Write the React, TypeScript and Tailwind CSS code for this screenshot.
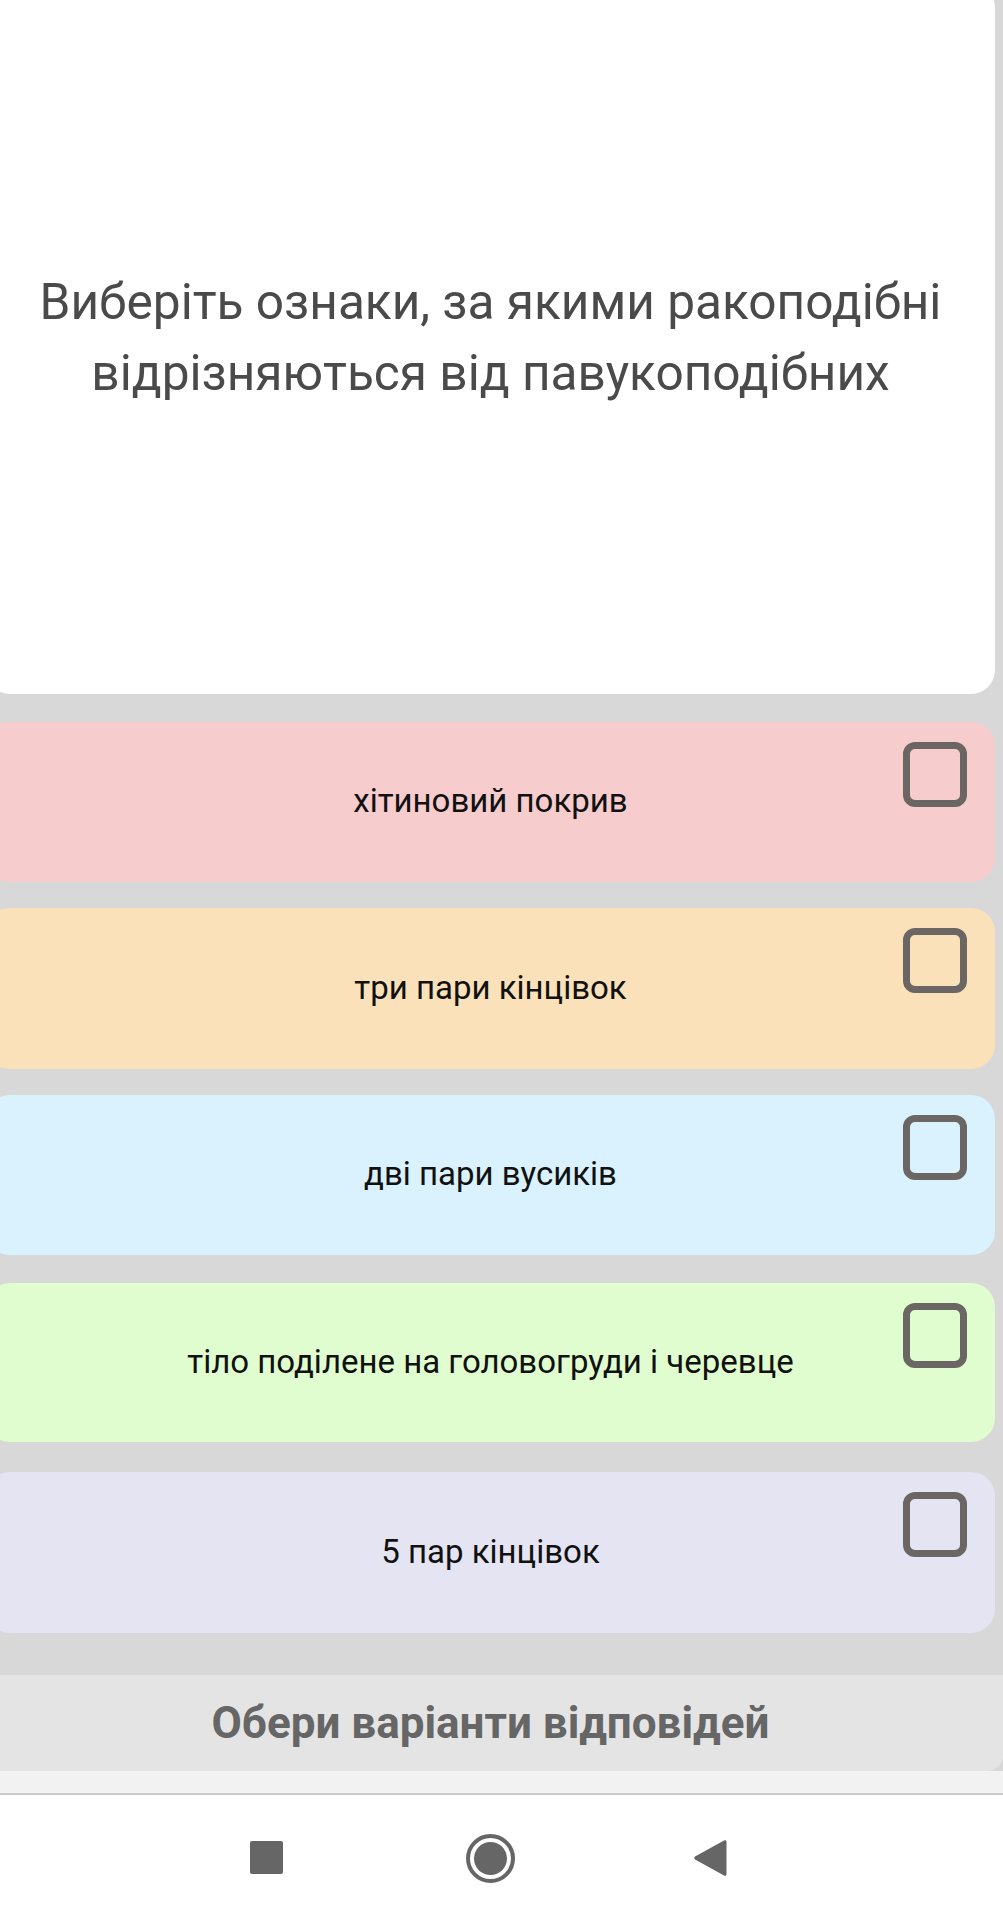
const options = [
  { label: "хітинове", text: "хітиновий покрив", className: "h-[160px] mt-[28px] bg-[#f6cccd]" },
  { label: "три", text: "три пари кінцівок", className: "h-[161px] mt-[26px] bg-[#fbe1b9]" },
  { label: "дві", text: "дві пари вусиків", className: "h-[160px] mt-[26px] bg-[#d9f2fd]" },
  { label: "тіло", text: "тіло поділене на головогруди і черевце", className: "h-[159px] mt-[28px] bg-[#e0fdcf]" },
  { label: "5", text: "5 пар кінцівок", className: "h-[161px] mt-[30px] bg-[#e4e4f2]" },
]

function Option({ text, className }: { text: string; className: string }) {
  return (
    <div className={`relative flex w-[1009px] -ml-[14px] items-center justify-center rounded-[24px] text-[33px] text-[#111111] ${className}`}>
      <span className="-mt-[2px]">{text}</span>
      {/* Checkbox */}
      <div className="absolute right-[28px] top-[20px] h-[65px] w-[64px] rounded-[12px] border-[7px] border-[#6b6663]" />
    </div>
  )
}

export default function App() {
  return (
    <div className="flex h-[1923px] w-[1003px] flex-col overflow-hidden bg-[#d8d8d8] font-['Roboto',sans-serif]">
      {/* Question */}
      <div className="-mt-[16px] -ml-[14px] flex h-[710px] w-[1009px] shrink-0 items-center justify-center rounded-[24px] bg-white text-center text-[49.6px] leading-[71px] text-[#4a4a4a]">
        <p className="-mt-[3px]">
          Виберіть ознаки, за якими ракоподібні
          <br />
          відрізняються від павукоподібних
        </p>
      </div>

      {/* Answers */}
      {options.map((o) => (
        <Option key={o.label} text={o.text} className={o.className} />
      ))}

      {/* Hint bar */}
      <div className="mt-[42px] -ml-[22px] flex h-[96px] w-[1025px] shrink-0 items-center justify-center rounded-br-[16px] rounded-bl-[16px] bg-[#e4e4e4] text-[44px] font-bold text-[#666666]">
        Обери варіанти відповідей
      </div>
      <div className="h-[22px] shrink-0 bg-[#f2f2f2]" />
      <div className="h-[2px] shrink-0 bg-[#c8c8c8]" />

      {/* Android nav bar */}
      <div className="relative flex-1 bg-white">
        <div className="absolute left-[250px] top-[46px] h-[33px] w-[33px] rounded-[2px] bg-[#666666]" />
        <div className="absolute left-[466px] top-[39px] flex h-[49px] w-[49px] items-center justify-center rounded-full border-[4px] border-[#666666]">
          <div className="h-[33px] w-[33px] rounded-full bg-[#666666]" />
        </div>
        <svg className="absolute left-[694px] top-[44px]" width="33" height="38" viewBox="0 0 33 38">
          <path d="M30 1.5 C31.3 0.8 32.5 1.5 32.5 3 V35 C32.5 36.5 31.3 37.2 30 36.5 L1 20.5 C0 19.8 0 18.2 1 17.5 Z" fill="#666666" />
        </svg>
      </div>
    </div>
  )
}
